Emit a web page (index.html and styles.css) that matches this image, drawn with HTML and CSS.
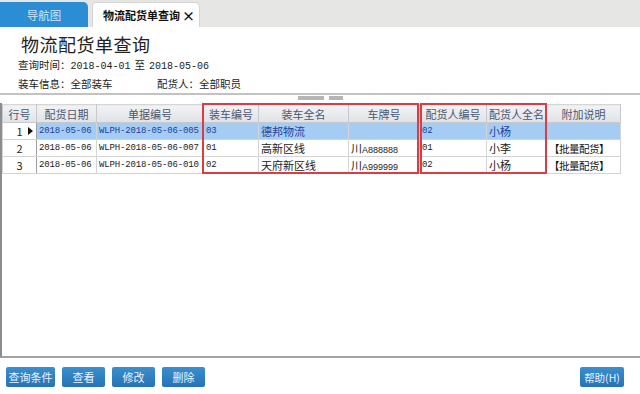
FILE: index.html
```html
<!DOCTYPE html>
<html lang="zh">
<head>
<meta charset="utf-8">
<link rel="stylesheet" href="styles.css">
</head>
<body>
<div class="tabs">
  <div class="tab nav">导航图</div>
  <div class="tab active">物流配货单查询<span class="close">×</span></div>
</div>
<div class="head">
  <h1 class="title">物流配货单查询</h1>
  <div class="info">查询时间：<span class="num">2018-04-01</span><span class="to">至</span><span class="num">2018-05-06</span></div>
  <div class="info pair">
    <span class="load">装车信息：全部装车</span>
    <span>配货人：全部职员</span>
  </div>
</div>
<div class="splitter"><span class="grip"></span><span class="grip short"></span></div>
<div class="gridarea">
  <div class="tablewrap">
    <table class="grid">
      <colgroup>
        <col class="c1"><col class="c2"><col class="c3"><col class="c4"><col class="c5"><col class="c6"><col class="c7"><col class="c8"><col class="c9">
      </colgroup>
      <thead>
        <tr>
          <th>行号</th><th>配货日期</th><th>单据编号</th><th>装车编号</th><th>装车全名</th><th>车牌号</th><th>配货人编号</th><th>配货人全名</th><th>附加说明</th>
        </tr>
      </thead>
      <tbody>
        <tr class="sel">
          <td class="rn">1<span class="ptr"></span></td>
          <td class="num">2018-05-06</td><td class="num">WLPH-2018-05-06-005</td><td class="num">03</td><td>德邦物流</td><td></td><td class="num">02</td><td>小杨</td><td></td>
        </tr>
        <tr>
          <td class="rn">2</td>
          <td class="num">2018-05-06</td><td class="num">WLPH-2018-05-06-007</td><td class="num">01</td><td>高新区线</td><td>川<span class="num">A888888</span></td><td class="num">01</td><td>小李</td><td class="note">【批量配货】</td>
        </tr>
        <tr>
          <td class="rn">3</td>
          <td class="num">2018-05-06</td><td class="num">WLPH-2018-05-06-010</td><td class="num">02</td><td>天府新区线</td><td>川<span class="num">A999999</span></td><td class="num">02</td><td>小杨</td><td class="note">【批量配货】</td>
        </tr>
      </tbody>
    </table>
    <div class="mark mark-car"></div>
    <div class="mark mark-person"></div>
  </div>
</div>
<div class="footer">
  <div class="btns">
    <button class="btn">查询条件</button>
    <button class="btn w">查看</button>
    <button class="btn w">修改</button>
    <button class="btn w">删除</button>
  </div>
  <button class="btn help">帮助(H)</button>
</div>
</body>
</html>
```
FILE: styles.css
```css
* { box-sizing: border-box; }
html, body {
  margin: 0;
  padding: 0;
  width: 640px;
  height: 394px;
  overflow: hidden;
  background: #ffffff;
  font-family: "Noto Sans CJK SC", "Noto Sans", sans-serif;
  color: #222;
}
.tabs {
  height: 27px;
  background: #e6e6e4;
  display: flex;
  align-items: flex-end;
  gap: 4px;
}
.tab {
  height: 25px;
  display: flex;
  align-items: center;
  justify-content: center;
  font-size: 11px;
  border-radius: 0 5px 0 0;
}
.tab.nav {
  width: 88px;
  background: #2b8dd3;
  color: #cfe6fb;
  font-size: 11.5px;
}
.tab.active {
  width: 108px;
  background: #ffffff;
  border: 1px solid #d4d4d4;
  border-bottom: none;
  border-radius: 4px 5px 0 0;
  font-weight: bold;
  color: #111;
  gap: 2px;
  padding-left: 6px;
}
.tab .close { font-size: 13px; font-weight: bold; }
.head {
  padding: 5px 0 4px 18px;
  height: 66px;
}
.title {
  margin: 0 0 0 3px;
  font-size: 18px;
  line-height: 24px;
  font-weight: normal;
  color: #222;
  letter-spacing: 0.5px;
}
.info {
  font-size: 10.5px;
  line-height: 17px;
  color: #222;
}
.info.pair { display: flex; }
.info .num { font-family: "Liberation Mono", monospace; font-size: 10px; }
.info .to { margin: 0 4px; }
.info .load { width: 139px; }
.splitter {
  height: 10px;
  border-top: 2px solid #c2c2c2;
  display: flex;
  justify-content: center;
  gap: 5px;
  padding-top: 1px;
}
.grip {
  width: 26px;
  height: 4px;
  background-image: radial-gradient(circle, #b5b5b5 0.8px, transparent 1px);
  background-size: 2px 2px;
}
.grip.short { width: 14px; }
.gridarea {
  height: 255px;
  border-left: 2px solid #8c8c8c;
  border-bottom: 2px solid #a2a2a2;
  padding-top: 1px;
}
.tablewrap {
  position: relative;
  width: 618px;
}
.grid {
  border-collapse: collapse;
  table-layout: fixed;
  width: 618px;
  font-size: 11px;
}
.c1 { width: 34px; } .c2 { width: 60px; } .c3 { width: 107px; }
.c4 { width: 55px; } .c5 { width: 90px; } .c6 { width: 71px; }
.c7 { width: 67px; } .c8 { width: 60px; } .c9 { width: 74px; }
.grid th {
  height: 18px;
  padding: 0;
  font-weight: normal;
  color: #4b5870;
  background: linear-gradient(#f2f3f5, #dfe2e6);
  border: 1px solid #c6c9ce;
  border-top-color: #d6d6d6;
  text-align: center;
  white-space: nowrap;
  overflow: hidden;
}
.grid td {
  height: 17px;
  padding: 0 0 0 2px;
  border: 1px solid #d4d4d4;
  white-space: nowrap;
  overflow: hidden;
  color: #222;
}
.grid td.num {
  font-family: "Liberation Mono", monospace;
  font-size: 9px;
  letter-spacing: -0.15px;
  padding-left: 2px;
}
.grid td .num { font-family: "Liberation Sans", sans-serif; font-size: 9px; }
.grid td.rn {
  text-align: center;
  padding: 0;
  position: relative;
  border-right-color: #a0a0a0;
}
.ptr {
  position: absolute;
  right: 3px;
  top: 4px;
  width: 0;
  height: 0;
  border-top: 4.5px solid transparent;
  border-bottom: 4.5px solid transparent;
  border-left: 5px solid #111;
}
.grid tr.sel td { background: #a5cdf4; color: #1d3f9c; }
.grid tr.sel td.rn { background: #fff; color: #222; }
.grid td.note { padding-left: 2px; font-size: 10.5px; letter-spacing: -0.5px; color: #111; }
.mark {
  position: absolute;
  top: -1px;
  height: 71px;
  border: 2px solid #dc3c44;
  pointer-events: none;
}
.mark-car { left: 200px; width: 217px; }
.mark-person { left: 418px; width: 127px; }
.footer {
  display: flex;
  justify-content: space-between;
  align-items: flex-start;
  padding: 9px 16px 0 6px;
}
.btns { display: flex; gap: 7px; }
.btn {
  height: 20px;
  padding: 0;
  border: none;
  border-radius: 2px;
  background: linear-gradient(#3a8fcf, #2673b4);
  color: #e9f2ff;
  font-family: "Noto Sans CJK SC", sans-serif;
  font-size: 11px;
  width: 49px;
}
.btn.w { width: 43px; }
.btn.help { width: 44px; font-size: 10.5px; }
```
